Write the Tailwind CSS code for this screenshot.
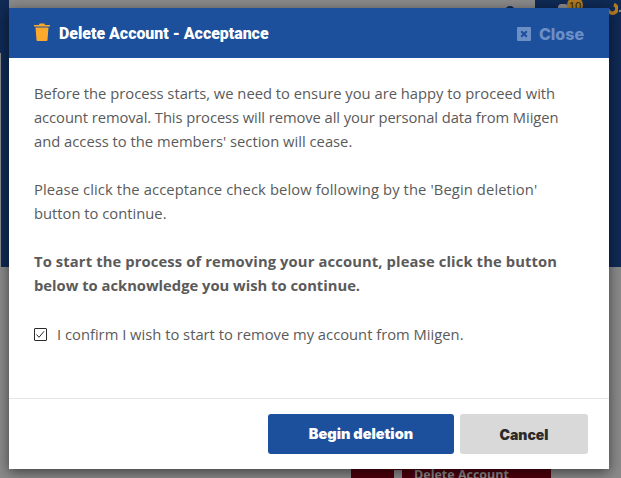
<!DOCTYPE html>
<html lang="en">
<head>
    <meta charset="UTF-8">
    <title>Delete Account</title>
    <script src="https://cdn.jsdelivr.net/npm/@tailwindcss/browser@4"></script>
</head>
<body class="bg-[#8a8a8a] font-['Open_Sans',sans-serif]">
    <div class="relative w-[621px] h-[478px] overflow-hidden">
        <!-- page behind the overlay -->
        <div class="flex flex-col h-full">
            <div class="h-[267px] flex justify-between bg-[#8a8a8a]">
                <div class="flex flex-col w-[9px]">
                    <div class="h-[53px] bg-[#0f2a55]"></div>
                    <div class="flex-1 ml-[1px] bg-[#0f2a55]"></div>
                </div>
                <div class="ml-auto mr-[20px] mt-[6px] w-[10px] h-[10px] rounded-full bg-[#0f2a55]"></div>
                <div class="w-[86px] bg-[#0f2a55] flex items-start text-[11px] leading-none">
                    <div class="ml-[23px] w-[10px] h-[7px] mt-[4px] rounded-full bg-[#8d8d8d]"></div>
                    <div class="-ml-[1px] w-[16px] h-[16px] -mt-[3px] rounded-full bg-[#b07a20] text-[#2c2008] text-center pt-[3px]">10</div>
                    <svg class="ml-[23px] mt-[3px] w-[12px] h-[12px]" viewBox="0 0 12 12">
                        <path d="M8 1.500a4.500 4.500 0 1 1-6 5" fill="none" stroke="#b87c20" stroke-width="3.500"/>
                    </svg>
                    <div class="ml-[1px] mt-[10px] w-[2px] h-[2px] bg-[#8d8d8d]"></div>
                </div>
            </div>
            <div class="flex-1 flex flex-col justify-end items-end">
                <div class="w-[200px] h-[9px] mr-[70px] bg-[#4d000d] overflow-hidden flex items-start text-[#8a8a8a] text-[12.500px] leading-[17px] font-bold">
                    <div class="ml-[43px] w-[8px] h-[9px] mt-[1px] bg-[#8a8a8a]"></div>
                    <span class="ml-[12px] -mt-[3px] whitespace-nowrap">Delete Account</span>
                </div>
            </div>
        </div>

        <!-- modal -->
        <div class="absolute left-[9px] top-[8px] w-[600px] h-[461px] bg-white flex flex-col shadow-[0_3px_12px_rgba(0,0,0,0.55)]">
            <div class="h-[50px] bg-[#1c4f9c] flex items-center justify-between pt-[2px] pl-[25px] pr-[25px]">
                <div class="flex items-center">
                    <svg class="w-[16px] h-[18px] -mt-[4px]" viewBox="0 0 16 18">
                        <path fill="#fdaa2c" d="M1.500 4.500h13l-1 12.500a1 1 0 0 1-1 1h-9a1 1 0 0 1-1-1z"/>
                        <path fill="#fdaa2c" d="M0 2h5l.6-1.500h4.800l.6 1.500h5v1.500h-16z"/>
                    </svg>
                    <span class="ml-[9px] text-white text-[15.900px] font-black font-['Roboto',sans-serif]">Delete Account - Acceptance</span>
                </div>
                <div class="flex items-center text-[#6c8fc6]">
                    <svg class="w-[14px] h-[14px]" viewBox="0 0 14 14">
                        <rect width="14" height="14" rx="1" fill="#6c8fc6"/>
                        <path d="M4.200 4.200l5.600 5.600M9.800 4.200l-5.600 5.600" stroke="#1c4f9c" stroke-width="2"/>
                    </svg>
                    <span class="ml-[8px] text-[16px] font-extrabold font-['Inter',sans-serif]">Close</span>
                </div>
            </div>

            <div class="flex-1 px-[25px] pt-[23px] text-[14.750px] leading-[24px] text-[#5a5a5a]">
                <p>Before the process starts, we need to ensure you are happy to proceed with<br><span class="tracking-[-0.08px]">account removal. This process will remove all your personal data from Miigen</span><br>and access to the members' section will cease.</p>
                <p class="mt-[24px]"><span class="tracking-[0.11px]">Please click the acceptance check below following by the 'Begin deletion'</span><br>button to continue.</p>
                <p class="mt-[24px] font-bold"><span class="tracking-[0.12px]">To start the process of removing your account, please click the button</span><br>below to acknowledge you wish to continue.</p>
                <label class="mt-[25px] flex items-center">
                    <svg class="w-[13px] h-[13px]" viewBox="0 0 13 13">
                        <rect x=".5" y=".5" width="12" height="12" rx=".5" fill="none" stroke="#2b2b2b"/>
                        <path d="M2.500 6.500l2.500 2.800 5-6" fill="none" stroke="#2b2b2b" stroke-width="1"/>
                    </svg>
                    <span class="ml-[10px]">I confirm I wish to start to remove my account from Miigen.</span>
                </label>
            </div>

            <div class="h-[71px] border-t border-[#e6e6e6] flex items-start justify-end gap-[6px] pt-[15px] pr-[21px]">
                <button class="w-[186px] h-[40px] rounded-[3px] bg-[#1c4f9c] text-white text-[14.500px] font-black font-['Inter',sans-serif]">Begin deletion</button>
                <button class="w-[128px] h-[40px] rounded-[3px] bg-[#d9d9d9] text-[#2b2b2b] text-[14px] font-black font-['Inter',sans-serif]">Cancel</button>
            </div>
        </div>
    </div>
</body>
</html>
